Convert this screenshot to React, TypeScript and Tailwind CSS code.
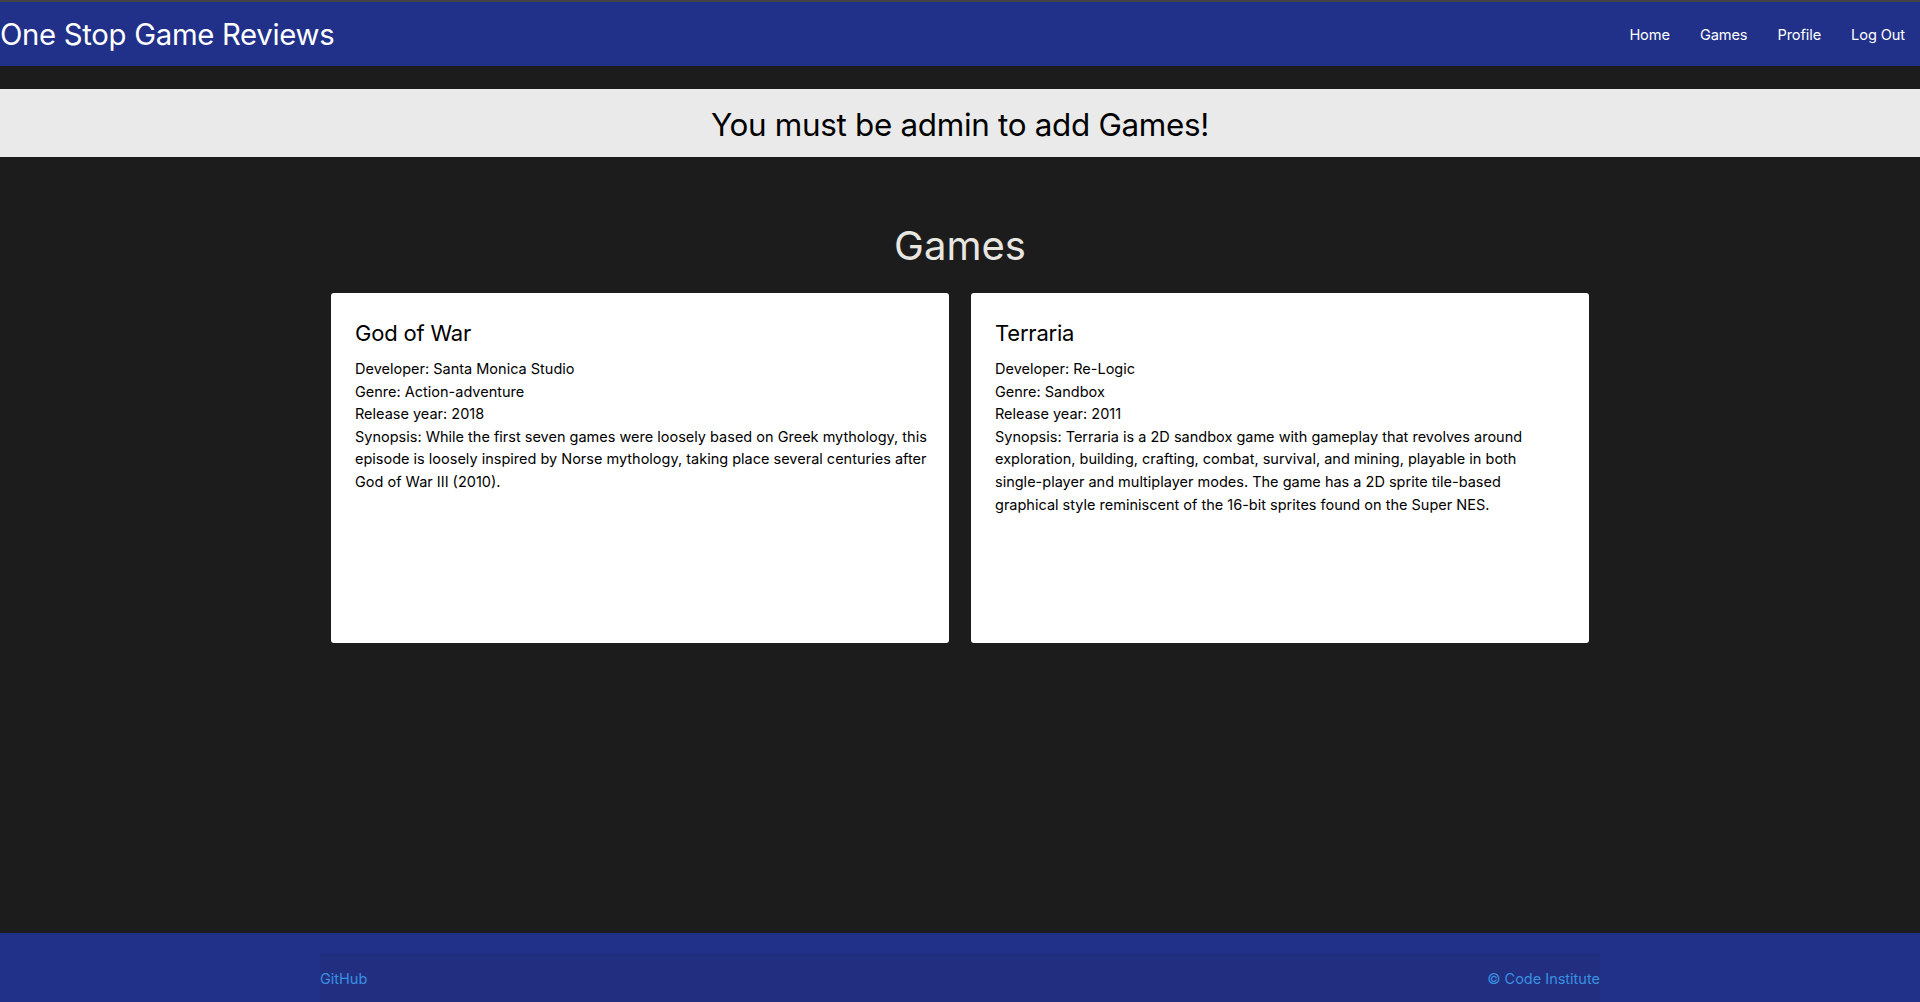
import React from "react";

const games = [
  {
    title: "God of War",
    dev: "Santa Monica Studio",
    genre: "Action-adventure",
    year: "2018",
    synopsis: [
      "Synopsis: While the first seven games were loosely based on Greek mythology, this",
      "episode is loosely inspired by Norse mythology, taking place several centuries after",
      "God of War III (2010).",
    ],
  },
  {
    title: "Terraria",
    dev: "Re-Logic",
    genre: "Sandbox",
    year: "2011",
    synopsis: [
      "Synopsis: Terraria is a 2D sandbox game with gameplay that revolves around",
      "exploration, building, crafting, combat, survival, and mining, playable in both",
      "single-player and multiplayer modes. The game has a 2D sprite tile-based",
      "graphical style reminiscent of the 16-bit sprites found on the Super NES.",
    ],
  },
];

export default function App() {
  return (
    <div
      className="min-h-screen h-[1002px] flex flex-col bg-[#1c1c1c]"
      style={{ fontFamily: "Inter, 'Noto Sans', sans-serif" }}
    >
      <div className="h-[2px] bg-[#444444]" />
      <nav className="h-[64px] bg-[#21318a] flex items-center justify-between">
        <span className="pt-[2px] text-[29.3px] text-white leading-none tracking-[-0.3px]">One Stop Game Reviews</span>
        <div className="flex gap-[30px] pr-[15px] pt-[4px] text-[14.6px] text-white tracking-[-0.1px]">
          <a>Home</a>
          <a>Games</a>
          <a>Profile</a>
          <a>Log Out</a>
        </div>
      </nav>
      <div className="mt-[23px] h-[68px] pt-[5px] bg-[#eaeaea] flex items-center justify-center">
        <h2 className="text-[31.4px] text-black leading-none tracking-[-0.3px]">You must be admin to add Games!</h2>
      </div>
      <main className="flex-1">
        <h1 className="mt-[65px] text-center text-[40px] leading-[48px] text-[#e8e6e0]">Games</h1>
        <div className="mt-[23px] mx-auto w-[1258px] grid grid-cols-2 gap-[22px]">
          {games.map((g) => (
            <div key={g.title} className="bg-white rounded-[3px] h-[350px] px-[24px] pt-[27px] pb-[24px]">
              <h3 className="text-[22px] leading-[27px] text-black mb-[11px] tracking-[-0.2px]">{g.title}</h3>
              <div className="text-[14.5px] leading-[22.6px] text-black">
                <div>Developer: {g.dev}</div>
                <div>Genre: {g.genre}</div>
                <div>Release year: {g.year}</div>
                {g.synopsis.map((l, i) => (
                  <div key={i} className="whitespace-nowrap">{l}</div>
                ))}
              </div>
            </div>
          ))}
        </div>
      </main>
      <footer className="h-[69px] bg-[#21318a] pt-[20px]">
        <div className="w-[1280px] h-full mx-auto bg-[#222f80] flex justify-between pt-[15px] text-[14.5px] leading-[22px] text-[#3a8fe0]">
          <a>GitHub</a>
          <a>© Code Institute</a>
        </div>
      </footer>
    </div>
  );
}
